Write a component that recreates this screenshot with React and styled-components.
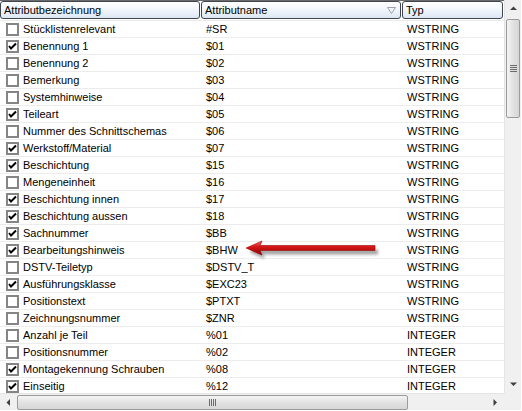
import React from 'react';
import styled, { createGlobalStyle } from 'styled-components';

const GlobalStyle = createGlobalStyle`
  html, body {
    margin: 0;
    padding: 0;
    background: #ffffff;
  }
  body {
    font-family: "Liberation Sans", Arial, sans-serif;
    font-size: 11px;
    color: #000;
  }
`;

// Liste <--
const Frame = styled.div`
  position: relative;
  width: 522px;
  height: 411px;
  display: grid;
  grid-template-columns: 504px 17px;
  grid-template-rows: 393px 17px;
  border-bottom: 1px solid #d8d8d8;
  overflow: hidden;
  background: #fff;
`;

const ListArea = styled.div`
  overflow: hidden;
  display: flex;
  flex-direction: column;
`;

const HeaderRow = styled.div`
  height: 19px;
  border-top: 1px solid #6a6a6a;
  display: grid;
  grid-template-columns: 201px 201px 102px;
  align-items: start;
  flex-shrink: 0;
`;

const HeaderCell = styled.div`
  height: 18px;
  box-sizing: border-box;
  border: 1px solid #3f4650;
  border-radius: 3px;
  background: linear-gradient(#ffffff 0%, #f2f6fb 45%, #dce7f4 100%);
  display: flex;
  align-items: center;
  justify-content: space-between;
  padding: 0 4px 0 3px;
  margin-right: ${(p) => (p.$last ? '1px' : '1px')};
  line-height: 16px;
  white-space: nowrap;
`;

const Row = styled.div`
  height: 17px;
  box-sizing: border-box;
  border-top: 1px solid #ececec;
  display: grid;
  grid-template-columns: 201px 201px 102px;
  align-items: center;
  flex-shrink: 0;
`;

const Cell = styled.div`
  display: flex;
  align-items: center;
  padding-left: ${(p) => p.$pad || '6px'};
  white-space: nowrap;
  line-height: 16px;
  overflow: hidden;
`;

const CheckBox = styled.span`
  width: 13px;
  height: 13px;
  box-sizing: border-box;
  border: 2px solid #858585;
  background: #fff;
  margin-right: 4px;
  display: inline-flex;
  align-items: center;
  justify-content: center;
  flex-shrink: 0;
`;
// -->

// Scrollbars <--
const VScroll = styled.div`
  background: #f0f0f0;
  border-left: 1px solid #e4e4e4;
  display: flex;
  flex-direction: column;
  align-items: center;
`;

const HScroll = styled.div`
  background: #f0f0f0;
  border-top: 1px solid #e4e4e4;
  display: flex;
  align-items: center;
`;

const Corner = styled.div`
  background: #f0f0f0;
`;

const ArrowBtn = styled.div`
  width: ${(p) => (p.$horizontal ? '17px' : '16px')};
  height: ${(p) => (p.$horizontal ? '16px' : '17px')};
  display: flex;
  align-items: center;
  justify-content: center;
  flex-shrink: 0;
`;

const Thumb = styled.div`
  box-sizing: border-box;
  border: 1px solid #9b9b9b;
  border-radius: 2px;
  display: flex;
  align-items: center;
  justify-content: center;
  ${(p) =>
    p.$horizontal
      ? `height: 15px; width: 391px; background: linear-gradient(#f4f4f4, #e2e2e2 50%, #d6d6d6);`
      : `width: 14px; height: 99px; margin-top: 2px; background: linear-gradient(90deg, #f4f4f4, #e2e2e2 50%, #d6d6d6);`}
`;

const Spacer = styled.div`
  flex: 1;
`;

const Annotation = styled.svg`
  position: absolute;
  left: 244px;
  top: 238px;
  overflow: visible;
`;
// -->

const rows = [
  [false, 'Stücklistenrelevant', '#SR', 'WSTRING'],
  [true, 'Benennung 1', '$01', 'WSTRING'],
  [false, 'Benennung 2', '$02', 'WSTRING'],
  [false, 'Bemerkung', '$03', 'WSTRING'],
  [false, 'Systemhinweise', '$04', 'WSTRING'],
  [true, 'Teileart', '$05', 'WSTRING'],
  [false, 'Nummer des Schnittschemas', '$06', 'WSTRING'],
  [true, 'Werkstoff/Material', '$07', 'WSTRING'],
  [true, 'Beschichtung', '$15', 'WSTRING'],
  [false, 'Mengeneinheit', '$16', 'WSTRING'],
  [true, 'Beschichtung innen', '$17', 'WSTRING'],
  [true, 'Beschichtung aussen', '$18', 'WSTRING'],
  [true, 'Sachnummer', '$BB', 'WSTRING'],
  [true, 'Bearbeitungshinweis', '$BHW', 'WSTRING'],
  [false, 'DSTV-Teiletyp', '$DSTV_T', 'WSTRING'],
  [true, 'Ausführungsklasse', '$EXC23', 'WSTRING'],
  [false, 'Positionstext', '$PTXT', 'WSTRING'],
  [false, 'Zeichnungsnummer', '$ZNR', 'WSTRING'],
  [false, 'Anzahl je Teil', '%01', 'INTEGER'],
  [false, 'Positionsnummer', '%02', 'INTEGER'],
  [true, 'Montagekennung Schrauben', '%08', 'INTEGER'],
  [true, 'Einseitig', '%12', 'INTEGER'],
];

const Check = () => (
  <svg width="9" height="9" viewBox="0 0 9 9">
    <path d="M1 4 L3 6.5 L8 1.5" stroke="#000" strokeWidth="2" fill="none" />
  </svg>
);

const Tri = ({ dir }) => {
  const pts = {
    up: '0,4 3.5,0.5 7,4',
    down: '0,0.5 3.5,4 7,0.5',
    left: '4,0 0.5,3.5 4,7',
    right: '0.5,0 4,3.5 0.5,7',
  }[dir];
  const w = dir === 'up' || dir === 'down' ? 7 : 5;
  const h = dir === 'up' || dir === 'down' ? 5 : 7;
  return (
    <svg width={w} height={h} viewBox={`0 0 ${w} ${h}`}>
      <polygon points={pts} fill="#404040" />
    </svg>
  );
};

const Grip = ({ horizontal }) =>
  horizontal ? (
    <svg width="8" height="7" viewBox="0 0 8 7">
      {[0, 2, 4, 6].map((x) => (
        <rect key={x} x={x} y="0" width="1" height="7" fill="#6a6a6a" />
      ))}
    </svg>
  ) : (
    <svg width="7" height="8" viewBox="0 0 7 8">
      {[0, 2, 4, 6].map((y) => (
        <rect key={y} x="0" y={y} width="7" height="1" fill="#6a6a6a" />
      ))}
    </svg>
  );

const App = () => {
  return (
    <>
      <GlobalStyle />
      <Frame>
        <ListArea>
          <HeaderRow>
            <HeaderCell>Attributbezeichnung</HeaderCell>
            <HeaderCell>
              Attributname
              <svg width="9" height="7" viewBox="0 0 9 7">
                <polygon points="0.5,0.5 8.5,0.5 4.5,6.5" fill="none" stroke="#9aa3ad" strokeWidth="1" />
              </svg>
            </HeaderCell>
            <HeaderCell $last>Typ</HeaderCell>
          </HeaderRow>
          {rows.map(([checked, label, name, type]) => (
            <Row key={name}>
              <Cell $pad="6px">
                <CheckBox>{checked && <Check />}</CheckBox>
                {label}
              </Cell>
              <Cell $pad="5px">{name}</Cell>
              <Cell $pad="5px">{type}</Cell>
            </Row>
          ))}
        </ListArea>
        <VScroll>
          <ArrowBtn>
            <Tri dir="up" />
          </ArrowBtn>
          <Thumb>
            <Grip />
          </Thumb>
          <Spacer />
          <ArrowBtn>
            <Tri dir="down" />
          </ArrowBtn>
        </VScroll>
        <HScroll>
          <ArrowBtn $horizontal>
            <Tri dir="left" />
          </ArrowBtn>
          <Thumb $horizontal>
            <Grip horizontal />
          </Thumb>
          <Spacer />
          <ArrowBtn $horizontal>
            <Tri dir="right" />
          </ArrowBtn>
        </HScroll>
        <Corner />
        <Annotation width="140" height="24" viewBox="0 0 140 24">
          <defs>
            <linearGradient id="red" x1="0" y1="0" x2="0" y2="1">
              <stop offset="0" stopColor="#ff6a6a" />
              <stop offset="0.4" stopColor="#d81818" />
              <stop offset="1" stopColor="#8e0000" />
            </linearGradient>
            <filter id="sh" x="-20%" y="-50%" width="140%" height="200%">
              <feGaussianBlur stdDeviation="1.6" />
            </filter>
          </defs>
          <g transform="translate(3,4)" opacity="0.55" filter="url(#sh)">
            <polygon points="2,10 18,3 16,7.5 131,7.5 131,12.5 16,12.5 18,17" fill="#555" />
          </g>
          <polygon points="2,10 18,3 16,7.5 131,7.5 131,12.5 16,12.5 18,17" fill="url(#red)" stroke="#9a0000" strokeWidth="0.6" />
        </Annotation>
      </Frame>
    </>
  );
};

export default App;
